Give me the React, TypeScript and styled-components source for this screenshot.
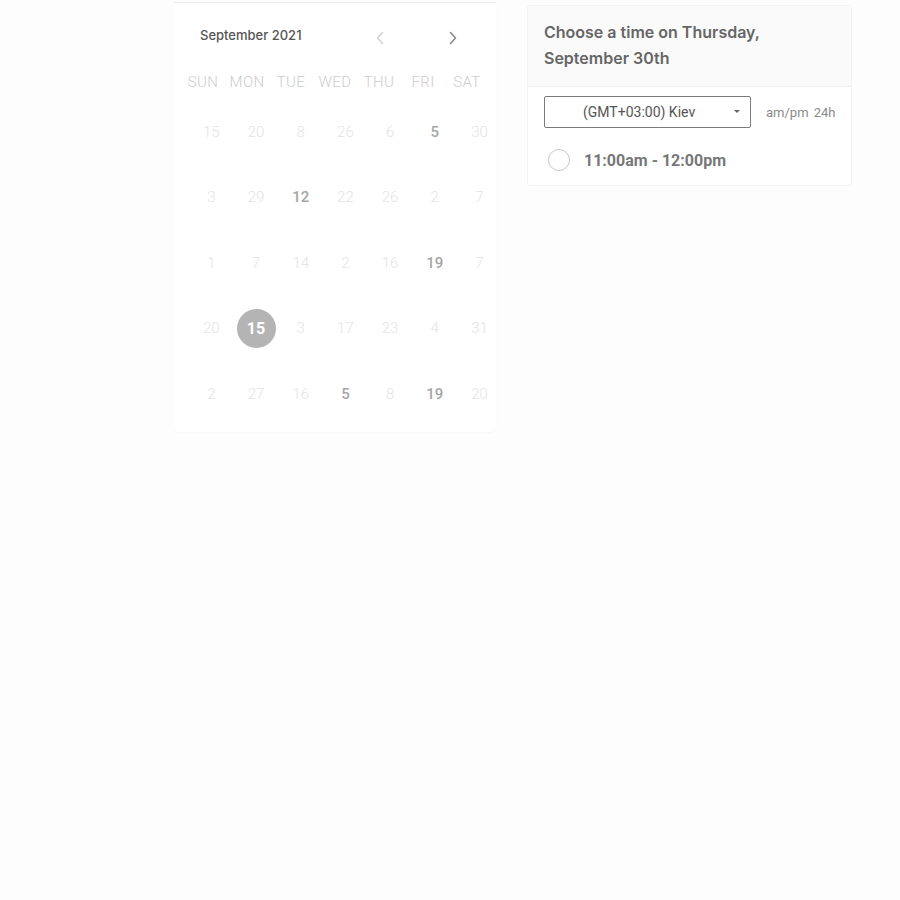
import React from "react";
import styled, { createGlobalStyle } from "styled-components";

const Global = createGlobalStyle`
  html, body { margin: 0; padding: 0; background: #fdfdfd; }
  body { font-family: Roboto, "Liberation Sans", sans-serif; }
`;

const Page = styled.div`
  display: flex;
  align-items: flex-start;
  gap: 31px;
  padding-left: 173px;
  min-height: 900px;
  box-sizing: border-box;
`;

const CalendarCard = styled.div`
  width: 323px;
  height: 430px;
  margin-top: 2px;
  background: #fff;
  border-top: 1px solid #ededed;
  border-radius: 0 0 6px 6px;
  box-shadow: 0 1px 2px rgba(0, 0, 0, 0.03);
  box-sizing: border-box;
  display: flex;
  flex-direction: column;
`;

const CalHeader = styled.div`
  display: flex;
  align-items: center;
  height: 70px;
  padding: 0 33px 0 27px;
`;

const MonthLabel = styled.div`
  font-family: Inter, "Noto Sans", sans-serif;
  font-size: 13px;
  font-weight: 500;
  color: #555;
  flex: 1;
  margin-top: -7px;
`;

const NavBtn = styled.span<{ $active?: boolean }>`
  display: inline-flex;
  width: 20px;
  justify-content: center;
  color: ${(p) => (p.$active ? "#8a8a8a" : "#d2d2d2")};
  margin-left: ${(p) => (p.$active ? "53px" : "0")};
`;

const WeekRow = styled.div`
  display: grid;
  grid-template-columns: repeat(7, 44px);
  padding-left: 8px;
  height: 18px;
  align-items: center;
`;

const WeekDay = styled.div`
  text-align: center;
  font-size: 15px;
  font-weight: 300;
  color: #cdcdcd;
  letter-spacing: 0.4px;
`;

const DaysGrid = styled.div`
  display: grid;
  grid-template-columns: repeat(7, 44.7px);
  grid-auto-rows: 65.5px;
  padding-left: 16px;
  margin-top: 8px;
`;

const Day = styled.div<{ $strong?: boolean }>`
  display: flex;
  align-items: center;
  justify-content: center;
  font-size: 15px;
  font-weight: ${(p) => (p.$strong ? 500 : 300)};
  color: ${(p) => (p.$strong ? "#a6a6a6" : "#e4e4e4")};
`;

const Selected = styled.div`
  width: 39px;
  height: 39px;
  border-radius: 50%;
  background: #b4b4b4;
  color: #fff;
  font-weight: 700;
  font-size: 16px;
  display: flex;
  align-items: center;
  justify-content: center;
`;

const Panel = styled.div`
  width: 325px;
  margin-top: 5px;
  background: #fff;
  border: 1px solid #f3f3f3;
  border-radius: 3px;
  box-sizing: border-box;
`;

const PanelHead = styled.div`
  background: #fafafa;
  padding: 13px 16px 15px;
  border-bottom: 1px solid #efefef;
`;

const Title = styled.div`
  font-family: Inter, "Noto Sans", sans-serif;
  font-size: 16px;
  font-weight: 600;
  line-height: 26px;
  color: #666;
`;

const Controls = styled.div`
  display: flex;
  align-items: center;
  padding: 9px 0 0 16px;
`;

const Select = styled.div`
  flex-shrink: 0;
  width: 207px;
  height: 32px;
  border: 1px solid #7a7a7a;
  border-radius: 2px;
  box-sizing: border-box;
  display: flex;
  align-items: center;
  position: relative;
  font-size: 14px;
  color: #555;
  padding-left: 38px;
`;

const Caret = styled.span`
  position: absolute;
  right: 10px;
  top: 13px;
  width: 0;
  height: 0;
  border-left: 3px solid transparent;
  border-right: 3px solid transparent;
  border-top: 3px solid #666;
`;

const Format = styled.div`
  margin-left: 15px;
  font-size: 13px;
  color: #8a8a8a;
  word-spacing: 2px;
  white-space: nowrap;
`;

const Slot = styled.div`
  display: flex;
  align-items: center;
  gap: 14px;
  padding: 7px 16px 0 20px;
  height: 57px;
  box-sizing: border-box;
`;

const Radio = styled.span`
  width: 22px;
  height: 22px;
  border-radius: 50%;
  border: 1.5px solid #c8c8c8;
  box-sizing: border-box;
  display: inline-block;
`;

const SlotText = styled.span`
  font-size: 16px;
  font-weight: 700;
  color: #777;
`;

const Chevron = ({ dir }: { dir: "left" | "right" }) => (
  <svg width="10" height="14" viewBox="0 0 10 14" fill="none">
    <path
      d={dir === "left" ? "M7.5 1.5 L2.5 7 L7.5 12.5" : "M2.5 1.5 L7.5 7 L2.5 12.5"}
      stroke="currentColor"
      strokeWidth="1.6"
      strokeLinecap="round"
      strokeLinejoin="round"
    />
  </svg>
);

const weeks: (string | number)[][] = [
  [15, 20, 8, 26, 6, "5*", 30],
  [3, 29, "12*", 22, 26, 2, 7],
  [1, 7, 14, 2, 16, "19*", 7],
  [20, "15!", 3, 17, 23, 4, 31],
  [2, 27, 16, "5*", 8, "19*", 20],
];

const days = ["SUN", "MON", "TUE", "WED", "THU", "FRI", "SAT"];

export default function App() {
  return (
    <>
      <Global />
      <Page>
        <CalendarCard>
          <CalHeader>
            <MonthLabel>September 2021</MonthLabel>
            <NavBtn>
              <Chevron dir="left" />
            </NavBtn>
            <NavBtn $active>
              <Chevron dir="right" />
            </NavBtn>
          </CalHeader>
          <WeekRow>
            {days.map((d) => (
              <WeekDay key={d}>{d}</WeekDay>
            ))}
          </WeekRow>
          <DaysGrid>
            {weeks.flat().map((v, i) => {
              const s = String(v);
              if (s.endsWith("!"))
                return (
                  <Day key={i}>
                    <Selected>{s.slice(0, -1)}</Selected>
                  </Day>
                );
              const strong = s.endsWith("*");
              return (
                <Day key={i} $strong={strong}>
                  {strong ? s.slice(0, -1) : s}
                </Day>
              );
            })}
          </DaysGrid>
        </CalendarCard>
        <Panel>
          <PanelHead>
            <Title>
              Choose a time on Thursday,
              <br />
              September 30th
            </Title>
          </PanelHead>
          <Controls>
            <Select>
              (GMT+03:00) Kiev
              <Caret />
            </Select>
            <Format>am/pm 24h</Format>
          </Controls>
          <Slot>
            <Radio />
            <SlotText>11:00am - 12:00pm</SlotText>
          </Slot>
        </Panel>
      </Page>
    </>
  );
}
